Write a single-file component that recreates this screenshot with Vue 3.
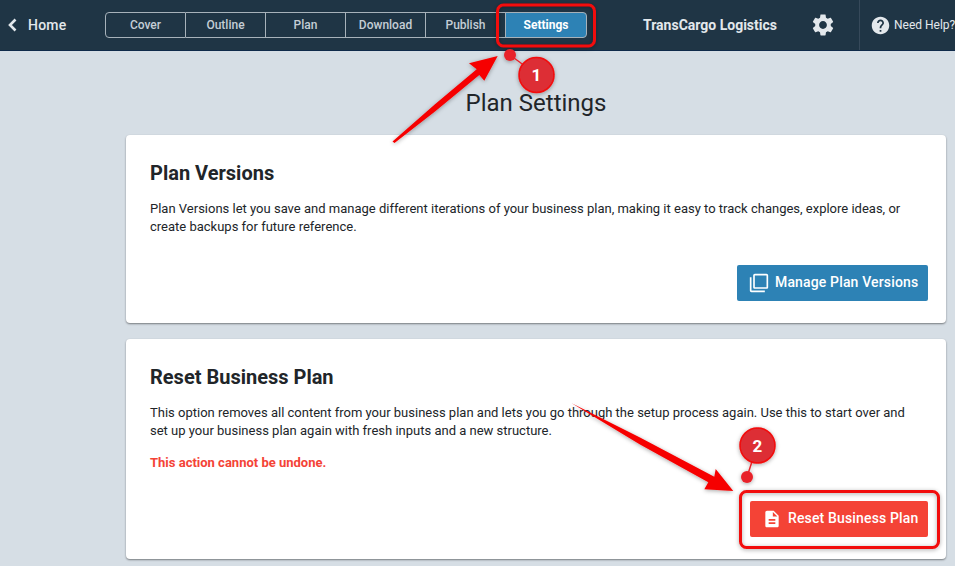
<script setup>
const tabs = ['Cover', 'Outline', 'Plan', 'Download', 'Publish', 'Settings']
const active = 'Settings'
</script>

<template>
  <div class="page">
    <header class="topbar">
      <a class="home">
        <svg class="chevron" width="10" height="14" viewBox="0 0 10 14">
          <path d="M8.5 1.5 3 7l5.5 5.5" fill="none" stroke="currentColor" stroke-width="2.6" />
        </svg>
        <span>Home</span>
      </a>
      <nav class="tabs">
        <div
          v-for="tab in tabs"
          :key="tab"
          class="tab"
          :class="{ active: tab === active }"
        >
          {{ tab }}
        </div>
      </nav>
      <div class="company">TransCargo Logistics</div>
      <svg class="gear" width="26" height="26" viewBox="0 0 24 24">
        <path fill="currentColor" d="M19.14 12.94c.04-.3.06-.61.06-.94 0-.32-.02-.64-.07-.94l2.03-1.58c.18-.14.23-.41.12-.61l-1.92-3.32c-.12-.22-.37-.29-.59-.22l-2.39.96c-.5-.38-1.03-.7-1.62-.94l-.36-2.54c-.04-.24-.24-.41-.48-.41h-3.84c-.24 0-.43.17-.47.41l-.36 2.54c-.59.24-1.13.57-1.62.94l-2.39-.96c-.22-.08-.47 0-.59.22L2.74 8.87c-.12.21-.08.47.12.61l2.03 1.58c-.05.3-.09.63-.09.94s.02.64.07.94l-2.03 1.58c-.18.14-.23.41-.12.61l1.92 3.32c.12.22.37.29.59.22l2.39-.96c.5.38 1.03.7 1.62.94l.36 2.54c.05.24.24.41.48.41h3.84c.24 0 .44-.17.47-.41l.36-2.54c.59-.24 1.13-.56 1.62-.94l2.39.96c.22.08.47 0 .59-.22l1.92-3.32c.12-.22.07-.47-.12-.61l-2.01-1.58zM12 15.6c-1.98 0-3.6-1.62-3.6-3.6s1.62-3.6 3.6-3.6 3.6 1.62 3.6 3.6-1.62 3.6-3.6 3.6z" />
      </svg>
      <div class="help">
        <svg width="21" height="21" viewBox="0 0 24 24">
          <path fill="currentColor" d="M12 2C6.48 2 2 6.48 2 12s4.48 10 10 10 10-4.48 10-10S17.52 2 12 2zm1 17h-2v-2h2v2zm2.07-7.75l-.9.92C13.45 12.9 13 13.5 13 15h-2v-.5c0-1.1.45-2.1 1.17-2.83l1.24-1.26c.37-.36.59-.86.59-1.41 0-1.1-.9-2-2-2s-2 .9-2 2H8c0-2.21 1.79-4 4-4s4 1.79 4 4c0 .88-.36 1.68-.93 2.25z" />
        </svg>
        <span>Need Help?</span>
      </div>
    </header>

    <main class="content">
      <h1 class="title">Plan Settings</h1>

      <section class="card versions">
        <h2>Plan Versions</h2>
        <p>Plan Versions let you save and manage different iterations of your business plan, making it easy to track changes, explore ideas, or create backups for future reference.</p>
        <div class="actions">
          <button class="btn blue">
            <svg width="20" height="20" viewBox="0 0 24 24">
              <path fill="currentColor" d="M3 5H1v16c0 1.1.9 2 2 2h16v-2H3V5zm18-4H7c-1.1 0-2 .9-2 2v14c0 1.1.9 2 2 2h14c1.1 0 2-.9 2-2V3c0-1.1-.9-2-2-2zm0 16H7V3h14v14z" />
            </svg>
            <span>Manage Plan Versions</span>
          </button>
        </div>
      </section>

      <section class="card reset">
        <h2>Reset Business Plan</h2>
        <p>This option removes all content from your business plan and lets you go through the setup process again. Use this to start over and set up your business plan again with fresh inputs and a new structure.</p>
        <p class="warning">This action cannot be undone.</p>
        <div class="actions">
          <button class="btn red">
            <svg width="20" height="20" viewBox="0 0 24 24">
              <path fill="currentColor" d="M14 2H6c-1.1 0-1.99.9-1.99 2L4 20c0 1.1.89 2 1.99 2H18c1.1 0 2-.9 2-2V8l-6-6zm2 16H8v-2h8v2zm0-4H8v-2h8v2zm-3-5V3.5L18.5 9H13z" />
            </svg>
            <span>Reset Business Plan</span>
          </button>
        </div>
      </section>
    </main>

    <!-- tutorial markup drawn on top of the screenshot -->
    <svg class="markup" width="955" height="566" viewBox="0 0 955 566">
      <defs>
        <filter id="soft" x="-20%" y="-20%" width="140%" height="140%">
          <feDropShadow dx="0" dy="1" stdDeviation="2" flood-color="#000" flood-opacity="0.35" />
        </filter>
      </defs>
      <g filter="url(#soft)">
        <rect x="497.5" y="5" width="97" height="41" rx="6" fill="none" stroke="#f20a0a" stroke-width="3" />
        <rect x="740.5" y="491.5" width="198" height="56" rx="6" fill="none" stroke="#f20a0a" stroke-width="3" />
        <polygon points="392.5,141.5 435,104.2 476.7,69.3 469,63.3 497.7,56 484.3,80.7 479.3,75 435,111.5 394.5,143" fill="#f60606" />
        <polygon points="571.7,403.3 640,437.5 714.3,476.7 715.7,469 733.3,491 704.3,489.3 708.3,482.3 640,444.5" fill="#f60606" />
        <line x1="510" y1="55" x2="537" y2="75" stroke="#e8242c" stroke-width="1.5" />
        <circle cx="510" cy="55" r="6" fill="#e8242c" />
        <circle cx="536.5" cy="75" r="17.5" fill="#dd2e36" stroke="#f20a0a" stroke-width="1.5" />
        <line x1="747" y1="477" x2="757" y2="446" stroke="#e8242c" stroke-width="1.5" />
        <circle cx="747" cy="477" r="6" fill="#e8242c" />
        <circle cx="757.5" cy="445.5" r="17.5" fill="#dd2e36" stroke="#f20a0a" stroke-width="1.5" />
      </g>
      <text x="536.5" y="81" class="num">1</text>
      <text x="757.5" y="452" class="num">2</text>
    </svg>
  </div>
</template>

<style>
html,
body {
  margin: 0;
  overflow: hidden;
}
</style>

<style scoped>
.page {
  position: relative;
  width: 955px;
  height: 566px;
  overflow: hidden;
  background: #d6dee5;
  font-family: Roboto, "Liberation Sans", sans-serif;
  color: #212529;
}

.topbar {
  display: flex;
  align-items: center;
  height: 50px;
  background: #1f3545;
  border-bottom: 1px solid #0f2a4a;
  color: #e3e8ec;
  white-space: nowrap;
}

.home {
  display: flex;
  align-items: center;
  gap: 11px;
  flex: none;
  width: 105px;
  padding-left: 7px;
  box-sizing: border-box;
  font-size: 14px;
  font-weight: 500;
  letter-spacing: 0.2px;
}

.chevron {
  flex: none;
}

.tabs {
  display: flex;
  width: 482px;
  height: 26px;
  flex: none;
}

.tab {
  display: flex;
  align-items: center;
  justify-content: center;
  width: 80px;
  box-sizing: border-box;
  border: 1px solid #a7b2ba;
  border-left-width: 0;
  font-size: 12px;
  font-weight: 500;
  color: #c5ced5;
}

.tab:first-child {
  width: 81px;
  border-left-width: 1px;
  border-radius: 4px 0 0 4px;
}

.tab.active {
  width: 82px;
  margin-left: -1px;
  border-left-width: 1px;
  border-radius: 0 4px 4px 0;
  background: #2d82b5;
  color: #fff;
  font-weight: 700;
}

.company {
  width: 169px;
  margin-left: 56px;
  flex: none;
  font-size: 14px;
  font-weight: 700;
}

.gear {
  flex: none;
  margin-left: -2px;
  color: #e3e8ec;
}

.help {
  display: flex;
  align-items: center;
  gap: 3px;
  flex: none;
  height: 50px;
  margin-left: 23px;
  padding-left: 10px;
  border-left: 1px solid #36495a;
  font-size: 12px;
}

.content {
  width: 820px;
  margin-left: 126px;
}

.title {
  margin: 0;
  padding-top: 37px;
  height: 84px;
  box-sizing: border-box;
  font-size: 24px;
  line-height: 30px;
  font-weight: 400;
  text-align: center;
  color: #212529;
}

.card {
  box-sizing: border-box;
  margin-bottom: 16px;
  padding: 25px 18px 22px 24px;
  background: #fff;
  border-radius: 4px;
  box-shadow: 0 1px 2px rgba(0, 0, 0, 0.45);
}

.versions {
  height: 188px;
}

.reset {
  height: 220px;
}

.card h2 {
  margin: 0 0 14px;
  font-size: 20px;
  line-height: 26px;
  font-weight: 700;
  color: #212529;
}

.card p {
  margin: 0;
  max-width: 770px;
  font-size: 13px;
  line-height: 18px;
  color: #212529;
}

.card .warning {
  margin-top: 14px;
  font-weight: 700;
  color: #f44336;
}

.actions {
  display: flex;
  justify-content: flex-end;
}

.versions .actions {
  margin-top: 29px;
}

.reset .actions {
  margin-top: 29px;
}

.btn {
  display: flex;
  align-items: center;
  gap: 6px;
  height: 36px;
  padding: 0 0 0 12px;
  border: 0;
  border-radius: 2px;
  color: #fff;
  font-family: inherit;
  font-size: 14px;
  font-weight: 500;
  letter-spacing: 0.15px;
}

.btn span {
  margin-bottom: 2px;
}

.blue {
  width: 191px;
  background: #2d82b5;
}

.red {
  width: 178px;
  background: #f44336;
}

.markup {
  position: absolute;
  top: 0;
  left: 0;
}

.num {
  fill: #fff;
  font-size: 17px;
  font-weight: 700;
  text-anchor: middle;
}
</style>
